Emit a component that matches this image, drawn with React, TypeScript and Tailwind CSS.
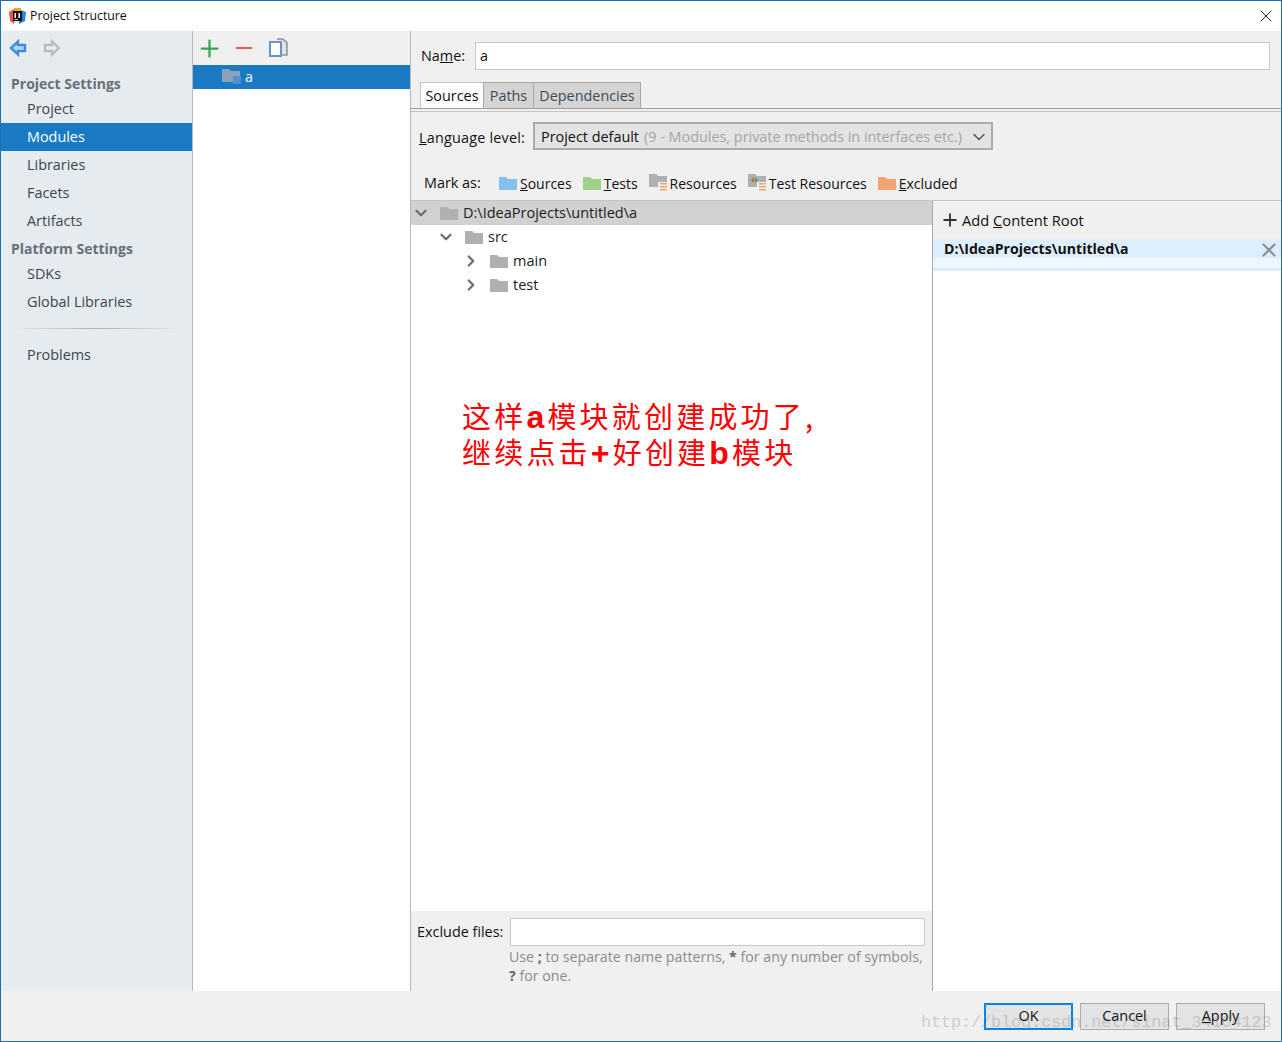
import React from 'react';
import { ChevronDown, ChevronRight, Plus, X } from 'lucide-react';

const FONT = "font-['Open_Sans','Noto_Sans',sans-serif]";

function Folder({ color = '#aeb0b2', className = '' }: { color?: string; className?: string }) {
  return (
    <svg width="18" height="14" viewBox="0 0 18 14" className={className}>
      <path d="M0 1h7l2 2h9v11H0z" fill={color} />
      <path d="M0 1h7l2 2H0z" fill={color} opacity="0.75" />
    </svg>
  );
}

function ResourceFolder({ test }: { test?: boolean }) {
  return (
    <svg width="19" height="18" viewBox="0 0 19 18">
      <path d="M0 0h7l2 2h9v11H0z" fill="#aeb0b2" />
      <rect x="9" y="8" width="10" height="10" fill="#f0f0f0" />
      <path d="M11 9h7v1.5h-7zM11 12h7v1.5h-7zM11 15h7v1.5h-7z" fill="#f0a36c" />
      {test && <path d="M3 6l3-3v6z" fill="#d9534f" />}
      {test && <path d="M10 6l-3-3v6z" fill="#3fa648" />}
    </svg>
  );
}

function NavItem({ label, active }: { label: string; active?: boolean }) {
  return (
    <div className={`h-7 pl-[26px] flex items-center ${active ? 'bg-[#1a7ac4] text-white' : 'text-[#3c4650]'}`}>{label}</div>
  );
}

function TreeRow({ depth, open, label, header }: { depth: number; open: boolean; label: string; header?: boolean }) {
  const Chevron = open ? ChevronDown : ChevronRight;
  return (
    <div className={`h-6 flex items-center ${header ? 'bg-[#d1d1d1]' : ''}`} style={{ paddingLeft: 1 + depth * 25 }}>
      <Chevron size={18} strokeWidth={3} className="text-[#6e6e6e]" />
      <Folder className="ml-[10px]" />
      <span className="ml-[5px] text-[14.500px] text-[#1c1c1c]">{label}</span>
    </div>
  );
}

function MarkItem({ icon, children }: { icon: React.ReactNode; children: React.ReactNode }) {
  return (
    <div className="flex items-center">
      <span className="w-[21px] flex">{icon}</span>
      <span className="pt-[2px]">{children}</span>
    </div>
  );
}

function Footer() {
  return (
    <div className="h-[50px] bg-[#f0f0f0] flex items-start justify-end pt-3 pr-[16px] gap-[7px] text-[#111]">
      <button className="w-[89px] h-[27px] pb-[1px] border-[2px] border-[#0a84e0] bg-[#e3e3e3] flex items-center justify-center">OK</button>
      <button className="w-[89px] h-[27px] pb-[1px] border-[1px] border-[#adadad] bg-[#e3e3e3] flex items-center justify-center">Cancel</button>
      <button className="w-[89px] h-[27px] pb-[1px] border-[1px] border-[#adadad] bg-[#e3e3e3] flex items-center justify-center"><span><u>A</u>pply</span></button>
    </div>
  );
}

export default function App() {
  return (
    <div className={`relative w-[1282px] h-[1042px] flex flex-col border border-[#1a6fb5] bg-white text-[14.4px] leading-none overflow-hidden ${FONT}`}>
      {/* title bar */}
      <div className="h-[30px] bg-white flex items-center pl-[8px] pr-[5px] shrink-0">
        <svg width="17" height="17" viewBox="0 0 17 17">
          <path d="M0 4l5-3 3 3-3 12-4-3z" fill="#f0533f" />
          <path d="M9 1l8 3-1 9-6 3z" fill="#1b87e8" />
          <path d="M5 0h7v3H5z" fill="#f6a623" />
          <rect x="4" y="3" width="9" height="10" fill="#111" />
          <path d="M5.5 5h1.5v5H5.500zM9.500 5H11v5H9.500zM5.500 11h3.500v.8H5.500z" fill="#fff" />
        </svg>
        <span className="ml-[4px] text-[12.3px] text-[#111]">Project Structure</span>
        <X size={20} strokeWidth={1.2} className="ml-auto text-[#222]" />
      </div>

      <div className="flex flex-1 min-h-0">
        {/* settings sidebar */}
        <div className="w-[191px] shrink-0 bg-[#e6ebf0] border-r border-[#b9b9b9] box-content">
          <div className="h-[34px] pl-2 flex items-center gap-[16px]">
            <svg width="18" height="18" viewBox="0 0 18 18">
              <path d="M9 2.500L2 9l7 6.500V12h7V6H9z" fill="#bcd5ec" stroke="#3c8fd6" strokeWidth="2.400" />
            </svg>
            <svg width="18" height="18" viewBox="0 0 18 18">
              <path d="M9 2.500L16 9l-7 6.500V12H2V6h7z" fill="#e6ebf0" stroke="#bdbdbd" strokeWidth="2.400" />
            </svg>
          </div>
          <div className="h-[21px] mt-[9px] pb-[2px] pl-[10px] flex items-center text-[14px] font-bold text-[#68707a]">Project Settings</div>
          <NavItem label="Project" />
          <NavItem label="Modules" active />
          <NavItem label="Libraries" />
          <NavItem label="Facets" />
          <NavItem label="Artifacts" />
          <div className="h-[21px] mt-[4px] pb-[2px] pl-[10px] flex items-center text-[14px] font-bold text-[#68707a]">Platform Settings</div>
          <NavItem label="SDKs" />
          <NavItem label="Global Libraries" />
          <div className="h-px mx-[10px] mt-[12px] bg-linear-to-r from-[#e6ebf0] via-[#aab0b6] to-[#e6ebf0]" />
          <div className="mt-[12px]"><NavItem label="Problems" /></div>
        </div>

        {/* module list */}
        <div className="w-[217px] shrink-0 border-r border-[#b9b9b9] box-content flex flex-col">
          <div className="h-[34px] bg-[#f0f0f0] pl-[3px] flex items-center">
            <Plus size={27} strokeWidth={2} className="text-[#2fa84f]" />
            <svg width="18" height="18" viewBox="0 0 18 18" className="ml-[12px]"><path d="M1 9h16" stroke="#e2603e" strokeWidth="2" /></svg>
            <svg width="20" height="20" viewBox="0 0 20 20" className="ml-[15px]">
              <path d="M9 1h6l4 4v12h-5" fill="#dfe3e7" stroke="#8e9296" strokeWidth="1.500" />
              <path d="M2 4h11v14H2z" fill="#fff" stroke="#6c94bd" strokeWidth="2" />
            </svg>
          </div>
          <div className="h-6 bg-[#1a7ac4] flex items-center pl-[29px] text-white">
            <svg width="19" height="18" viewBox="0 0 19 18">
              <path d="M0 1h7l2 2h9v11H0z" fill="#8ca1bb" />
              <rect x="11" y="8" width="8" height="8" fill="#4d93d4" />
            </svg>
            <span className="ml-[4px]">a</span>
          </div>
        </div>

        {/* module details */}
        <div className="flex-1 min-w-0 flex flex-col bg-[#f0f0f0] text-[#111]">
          <div className="h-[51px] shrink-0 flex items-start pl-[10px] pr-[11px] pt-[11px]">
            <span className="w-[54px] h-[28px] flex items-center"><span>Na<u>m</u>e:</span></span>
            <div className="flex-1 h-[28px] bg-white border border-[#c8c8c8] flex items-center pl-[4px]">a</div>
          </div>
          <div className="h-[27px] shrink-0 flex pl-[9px] border-b border-[#9e9e9e]">
            <div className="w-[63px] pt-[2px] bg-white border-l border-t border-[#c4c4c4] flex items-center justify-center">Sources</div>
            <div className="w-[51px] pt-[2px] bg-[#d4d4d4] border border-[#a8a8a8] border-b-0 flex items-center justify-center text-[#3d4a55]">Paths</div>
            <div className="w-[107px] pt-[2px] bg-[#d4d4d4] border border-l-0 border-[#a8a8a8] border-b-0 flex items-center justify-center text-[#3d4a55]">Dependencies</div>
          </div>
          <div className="h-[3px] shrink-0 border-b border-[#c4c4c4]" />
          <div className="h-[48px] shrink-0 flex items-center pl-[8px]">
            <span className="w-[114px] pt-[4px] tracking-[0.2px]"><u>L</u>anguage level:</span>
            <div className="w-[460px] h-[28px] pt-[2px] border-[2px] border-[#ababab] bg-[#e3e3e3] flex items-center pl-[6px]">
              <span>Project default</span>
              <span className="ml-[5px] text-[#a5a5a5]">(9 - Modules, private methods in interfaces etc.)</span>
              <ChevronDown size={20} strokeWidth={1.8} className="ml-auto mr-[2px] text-[#555]" />
            </div>
          </div>
          <div className="h-[41px] shrink-0 flex items-center pl-[13px] border-b border-[#c4c4c4] pt-[6px]">
            <span className="w-[75px]">Mark as:</span>
            <div className="flex items-center gap-[11px] text-[14px]">
              <MarkItem icon={<Folder color="#85c1ee" />}><u>S</u>ources</MarkItem>
              <MarkItem icon={<Folder color="#9fd18b" />}><u>T</u>ests</MarkItem>
              <MarkItem icon={<ResourceFolder />}>Resources</MarkItem>
              <MarkItem icon={<ResourceFolder test />}>Test Resources</MarkItem>
              <MarkItem icon={<Folder color="#f4a574" />}><u>E</u>xcluded</MarkItem>
            </div>
          </div>

          <div className="flex-1 min-h-0 flex">
            {/* source tree */}
            <div className="w-[521px] shrink-0 border-r border-[#a8a8a8] box-content flex flex-col">
              <div className="flex-1 bg-white">
                <TreeRow depth={0} open label="D:\IdeaProjects\untitled\a" header />
                <TreeRow depth={1} open label="src" />
                <TreeRow depth={2} open={false} label="main" />
                <TreeRow depth={2} open={false} label="test" />
              </div>
              <div className="h-[80px] shrink-0 bg-[#f0f0f0] pt-[7px]">
                <div className="flex items-center pl-[6px] pr-[7px]">
                  <span className="w-[93px]">Exclude files:</span>
                  <div className="flex-1 h-[28px] bg-white border border-[#c8c8c8]" />
                </div>
                <p className="mt-[1px] ml-[98px] text-[14.2px] text-[#8c8c8c] leading-[19px] whitespace-nowrap">
                  Use <b className="text-[#666]">;</b> to separate name patterns, <b className="text-[#666]">*</b> for any number of symbols,<br />
                  <b className="text-[#666]">?</b> for one.
                </p>
              </div>
            </div>

            {/* content roots */}
            <div className="flex-1 min-w-0 flex flex-col bg-white">
              <div className="h-[38px] shrink-0 bg-[#f0f0f0] flex items-center pl-[7px]">
                <Plus size={20} strokeWidth={2.200} className="text-[#333]" />
                <span className="ml-[2px] text-[14.700px]">Add <u>C</u>ontent Root</span>
              </div>
              <div className="h-[19px] pt-[2px] shrink-0 bg-[#ddefff] flex items-center pl-[11px] pr-[1px] font-bold">
                <span className="text-[14.100px]">D:\IdeaProjects\untitled\a</span>
                <X size={22} strokeWidth={2.400} className="ml-auto -my-[3px] text-[#8a8f94]" />
              </div>
              <div className="h-[10px] shrink-0 bg-[#eef7ff]" />
              <div className="h-[3px] shrink-0 bg-[#ddefff]" />
            </div>
          </div>
        </div>
      </div>

      <Footer />

      {/* red annotation over the tree */}
      <div className="absolute left-[461px] top-[396px] text-[#ff0000] text-[29px] leading-[36px] tracking-[3.2px] font-['Noto_Sans_CJK_SC',sans-serif]">
        <div>这样<b className="font-['Liberation_Sans',sans-serif] text-[32px]">a</b>模块就创建成功了,</div>
        <div className="-mt-[2px]">继续点击<b className="font-['Liberation_Sans',sans-serif] text-[32px]">+</b>好创建<b className="font-['Liberation_Sans',sans-serif] text-[32px]">b</b>模块</div>
      </div>

      {/* watermark */}
      <div className="absolute left-[920px] top-[1014px] text-[16.7px] text-[#6a6a6a] opacity-25 font-['Liberation_Mono',monospace] whitespace-nowrap pointer-events-none">
        http://blog.csdn.net/sinat_34104123
      </div>
    </div>
  );
}
